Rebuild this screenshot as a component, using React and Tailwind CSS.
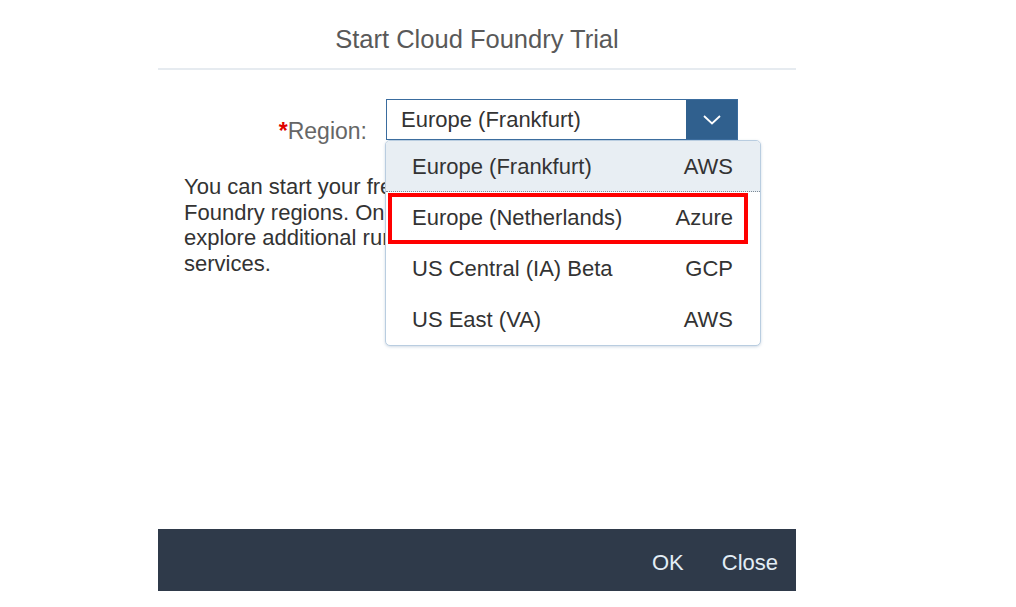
import React from 'react'

const regions = [
  { name: 'Europe (Frankfurt)', provider: 'AWS' },
  { name: 'Europe (Netherlands)', provider: 'Azure' },
  { name: 'US Central (IA) Beta', provider: 'GCP' },
  { name: 'US East (VA)', provider: 'AWS' },
]

const App = () => {
  return (
    <div className="w-[1016px] h-[607px] bg-white overflow-hidden" style={{ fontFamily: '"Liberation Sans", Arial, sans-serif' }}>
      <div className="ml-[158px] w-[638px] flex flex-col">
        {/* header */}
        <div className="h-[70px] flex items-center justify-center border-b-2 border-[#e6ebf0]">
          <h1 className="text-[25.5px] text-[#595959] mt-[11px]">Start Cloud Foundry Trial</h1>
        </div>

        {/* content */}
        <div className="h-[459px] pt-[29px]">
          <div className="flex items-start gap-[19px]">
            <label className="w-[209px] text-right pt-[19px] text-[23px] leading-[26px] text-[#666]">
              <span className="text-[#e00000] font-bold">*</span>Region:
            </label>
            <div className="relative w-[352px]">
              <div className="h-[41px] flex border border-[#3a6c9e] bg-white">
                <div className="flex-1 flex items-center pl-[14px] text-[22px] text-[#333]">Europe (Frankfurt)</div>
                <div className="w-[51px] bg-[#30608e] flex items-center justify-center">
                  <svg width="18" height="10" viewBox="0 0 18 10" fill="none">
                    <path d="M1 1l8 7.5L17 1" stroke="white" strokeWidth="1.8" />
                  </svg>
                </div>
              </div>
              {/* dropdown list */}
              <div className="absolute left-[-1px] top-[41px] w-[376px] bg-white border border-[#b9cde0] rounded-[5px] shadow-[0_1px_3px_rgba(120,150,180,0.35)] z-10 overflow-hidden">
                {regions.map((r, i) => (
                  <div
                    key={r.name}
                    className={
                      i === 0
                        ? 'h-[51px] flex items-center justify-between pl-[26px] pr-[27px] text-[22px] text-[#333] bg-[#e8eef3] border-b border-dotted border-[#7d8a96]'
                        : 'h-[51px] flex items-center justify-between pl-[26px] pr-[27px] text-[22px] text-[#333]'
                    }
                  >
                    <span>{r.name}</span>
                    <span>{r.provider}</span>
                  </div>
                ))}
                <div className="absolute left-[2px] top-[52px] w-[360px] h-[51px] border-[4px] border-[#ff0000]" />
              </div>
            </div>
          </div>

          <p className="mt-[30px] pl-[26px] text-[22px] leading-[25.7px] text-[#333]">
            You can start your free trial in one of the following Cloud<br />
            Foundry regions. Once your trial is set up, you can<br />
            explore additional runtimes and<br />
            services.
          </p>
        </div>

        {/* footer */}
        <div className="h-[62px] bg-[#2f3a4a] flex items-center justify-end pr-[18px] pt-[4px] gap-[38px] text-[22px] text-[#e3edf6]">
          <button>OK</button>
          <button>Close</button>
        </div>
      </div>
    </div>
  )
}

export default App
